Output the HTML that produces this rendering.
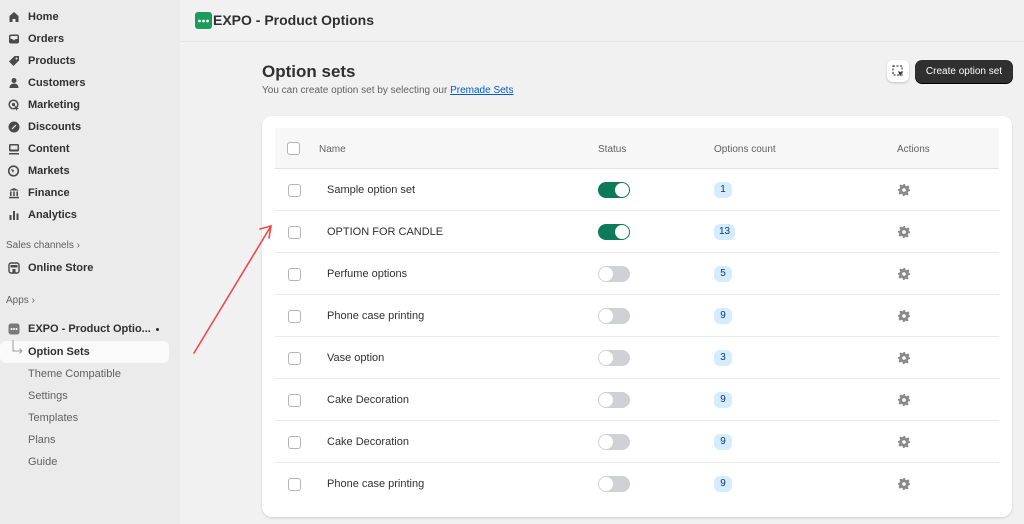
<!DOCTYPE html>
<html><head><meta charset="utf-8"><style>
*{box-sizing:border-box;margin:0;padding:0}
body{width:1024px;height:524px;overflow:hidden;background:#f1f1f1;font-family:"Liberation Sans",sans-serif;color:#303030;position:relative}
.side{position:absolute;left:0;top:0;width:180px;height:524px;background:#ebebeb}
.ni{position:absolute;left:8px;font-size:11px;font-weight:bold;color:#303030;height:20px;line-height:20px;display:flex;align-items:center}
.ni .ic{width:12px;height:12px;margin-right:8px;display:inline-block}
.sub{position:absolute;left:28px;font-size:11px;color:#616161}
.sec{position:absolute;left:6px;font-size:10px;color:#616161}
.abs{position:absolute}
.card{position:absolute;left:262px;top:116px;width:750px;height:401px;background:#fff;border-radius:10px;box-shadow:0 1px 2px rgba(0,0,0,.15)}
.th{position:absolute;left:13px;top:12px;width:724px;height:41px;background:#f7f7f7;border-bottom:1px solid #e3e3e3}
.row{position:absolute;left:13px;width:724px;height:42px;border-bottom:1px solid #ebebeb}
.cb{position:absolute;width:13px;height:13px;border:1px solid #b5b5b5;border-radius:3px;background:#fff}
.tg{position:absolute;left:323px;top:13px;width:32px;height:16px;border-radius:8px}
.tg.on{background:#0d7a5a}
.tg.off{background:#cfd1d4}
.tg i{position:absolute;top:1px;width:14px;height:14px;border-radius:50%;background:#fff}
.bd{position:absolute;left:439px;top:13px;height:16px;min-width:18px;padding:0 5px;border-radius:6px;background:#d5ebff;color:#103a63;font-size:10px;line-height:16px;text-align:center}
.nm{position:absolute;left:52px;top:15px;font-size:11px;color:#303030}
.gear{position:absolute;left:623px;top:15px}
</style></head><body>
<div class="side">
<div class="ni" style="top:7px"><svg class="ic" viewBox="0 0 12 12"><path d="M6 1L1.5 5v6h3V8h3v3h3V5z" fill="#4a4a4a"/></svg>Home</div>
<div class="ni" style="top:29px"><svg class="ic" viewBox="0 0 12 12"><rect x="1" y="1.5" width="10" height="9" rx="2" fill="#4a4a4a"/><path d="M2.5 3h7v3H7.5l-1.5 1.5L4.5 6h-2z" fill="#ebebeb"/></svg>Orders</div>
<div class="ni" style="top:51px"><svg class="ic" viewBox="0 0 12 12"><path d="M6.5 1H11v4.5L5.5 11 1 6.5z" fill="#4a4a4a"/><circle cx="8.5" cy="3.5" r="1" fill="#ebebeb"/></svg>Products</div>
<div class="ni" style="top:73px"><svg class="ic" viewBox="0 0 12 12"><circle cx="6" cy="3.5" r="2.5" fill="#4a4a4a"/><path d="M1.5 11c0-3 2-4.5 4.5-4.5s4.5 1.5 4.5 4.5z" fill="#4a4a4a"/></svg>Customers</div>
<div class="ni" style="top:95px"><svg class="ic" viewBox="0 0 12 12"><circle cx="5.5" cy="5.5" r="4.3" fill="none" stroke="#4a4a4a" stroke-width="1.5"/><circle cx="5.5" cy="5.5" r="1.6" fill="#4a4a4a"/><path d="M6 6l5 4-2 .3-.5 1.7z" fill="#4a4a4a"/></svg>Marketing</div>
<div class="ni" style="top:117px"><svg class="ic" viewBox="0 0 12 12"><circle cx="6" cy="6" r="5.5" fill="#4a4a4a"/><path d="M4 8l4-4" stroke="#ebebeb" stroke-width="1.2"/></svg>Discounts</div>
<div class="ni" style="top:139px"><svg class="ic" viewBox="0 0 12 12"><rect x="1" y="1" width="10" height="7.5" rx="1.5" fill="#4a4a4a"/><rect x="2.5" y="2.5" width="7" height="4" fill="#ebebeb"/><rect x="1" y="10" width="10" height="1.5" fill="#4a4a4a"/></svg>Content</div>
<div class="ni" style="top:161px"><svg class="ic" viewBox="0 0 12 12"><circle cx="5.5" cy="6" r="4.8" fill="none" stroke="#4a4a4a" stroke-width="1.6"/><path d="M3 4l3 1-1 3z" fill="#4a4a4a"/></svg>Markets</div>
<div class="ni" style="top:183px"><svg class="ic" viewBox="0 0 12 12"><path d="M6 1l5 2.5H1z" fill="#4a4a4a"/><rect x="2" y="4.5" width="1.6" height="4.5" fill="#4a4a4a"/><rect x="5.2" y="4.5" width="1.6" height="4.5" fill="#4a4a4a"/><rect x="8.4" y="4.5" width="1.6" height="4.5" fill="#4a4a4a"/><rect x="1" y="9.8" width="10" height="1.5" fill="#4a4a4a"/></svg>Finance</div>
<div class="ni" style="top:205px"><svg class="ic" viewBox="0 0 12 12"><rect x="1.5" y="6" width="2" height="5" fill="#4a4a4a"/><rect x="5" y="2" width="2" height="9" fill="#4a4a4a"/><rect x="8.5" y="4.5" width="2" height="6.5" fill="#4a4a4a"/></svg>Analytics</div>
<div class="sec" style="top:240px">Sales channels ›</div>
<div class="ni" style="top:258px"><svg class="ic" viewBox="0 0 12 12"><rect x="1" y="1" width="10" height="10" rx="2" fill="none" stroke="#4a4a4a" stroke-width="1.4"/><rect x="2.5" y="3" width="7" height="2.5" fill="#4a4a4a"/><rect x="4.5" y="7" width="3" height="4" fill="#4a4a4a"/></svg>Online Store</div>
<div class="sec" style="top:295px">Apps ›</div>
<div class="ni" style="top:319px;font-weight:bold"><svg class="ic" viewBox="0 0 12 12"><rect x="0.5" y="0.5" width="11" height="11" rx="2.5" fill="#7a7a7a"/><circle cx="3.5" cy="6" r="1" fill="#fff"/><circle cx="6" cy="6" r="1" fill="#fff"/><circle cx="8.5" cy="6" r="1" fill="#fff"/></svg>EXPO - Product Optio...</div>
<div class="abs" style="left:156px;top:328px;width:3px;height:3px;border-radius:50%;background:#303030"></div>
<div class="abs" style="left:0;top:341px;width:169px;height:22px;background:#fafafa;border-radius:6px"></div>
<svg class="abs" style="left:11px;top:340px" width="14" height="16"><path d="M2 0v11h9M8.5 8.5L11 11 8.5 13.5" fill="none" stroke="#9a9a9a" stroke-width="1"/></svg>
<div class="sub" style="top:346px;color:#303030;font-weight:bold">Option Sets</div>
<div class="sub" style="top:368px">Theme Compatible</div>
<div class="sub" style="top:390px">Settings</div>
<div class="sub" style="top:412px">Templates</div>
<div class="sub" style="top:434px">Plans</div>
<div class="sub" style="top:456px">Guide</div>
</div>
<div class="abs" style="left:180px;top:41px;width:844px;height:1px;background:#e6e6e6"></div>
<svg class="abs" style="left:195px;top:12px" width="17" height="17"><rect width="17" height="17" rx="3" fill="#1a9c5a"/><circle cx="4.5" cy="9" r="1.4" fill="#fff"/><circle cx="8.5" cy="9" r="1.4" fill="#fff"/><circle cx="12.5" cy="9" r="1.4" fill="#fff"/></svg>
<div class="abs" style="left:213px;top:12px;font-size:14px;font-weight:bold;color:#303030">EXPO - Product Options</div>
<div class="abs" style="left:262px;top:62px;font-size:17px;font-weight:bold;color:#303030">Option sets</div>
<div class="abs" style="left:262px;top:85px;font-size:10px;color:#616161">You can create option set by selecting our <span style="color:#005bd3;text-decoration:underline">Premade Sets</span></div>
<div class="abs" style="left:887px;top:60px;width:22px;height:22px;background:#fff;border-radius:6px;box-shadow:0 1px 2px rgba(0,0,0,.2)"><svg style="position:absolute;left:5px;top:5px" width="12" height="12"><rect x="1" y="1" width="9" height="9" fill="none" stroke="#4a4a4a" stroke-width="1.3" stroke-dasharray="2 1.5"/><path d="M6 6l5 2-2 1-1 2z" fill="#303030"/></svg></div>
<div class="abs" style="left:915px;top:60px;width:98px;height:23px;background:#303030;border-radius:7px;color:#fff;font-size:10px;line-height:23px;text-align:center;box-shadow:0 1px 0 #000">Create option set</div>
<div class="card">
<div class="th"><div class="cb" style="left:12px;top:14px"></div>
<div class="abs" style="left:44px;top:16px;font-size:10px;color:#616161">Name</div>
<div class="abs" style="left:323px;top:16px;font-size:10px;color:#616161">Status</div>
<div class="abs" style="left:439px;top:16px;font-size:10px;color:#616161">Options count</div>
<div class="abs" style="left:622px;top:16px;font-size:10px;color:#616161">Actions</div></div>
<div class="row" style="top:53px"><div class="cb" style="left:13px;top:15px"></div><div class="nm">Sample option set</div><div class="tg on"><i style="right:1px"></i></div><div class="bd">1</div><svg class="gear" width="12" height="12" viewBox="0 0 12 12"><path d="M5 0h2l.3 1.6 1.4.6 1.4-.9 1.4 1.4-.9 1.4.6 1.4L12 5v2l-1.6.3-.6 1.4.9 1.4-1.4 1.4-1.4-.9-1.4.6L7 12H5l-.3-1.6-1.4-.6-1.4.9L.5 9.3l.9-1.4-.6-1.4L0 7V5l1.6-.3.6-1.4-.9-1.4L2.7.5l1.4.9 1.4-.6z" fill="#8a8a8a"/><circle cx="6" cy="6" r="1.8" fill="#fff"/></svg></div>
<div class="row" style="top:95px"><div class="cb" style="left:13px;top:15px"></div><div class="nm">OPTION FOR CANDLE</div><div class="tg on"><i style="right:1px"></i></div><div class="bd">13</div><svg class="gear" width="12" height="12" viewBox="0 0 12 12"><path d="M5 0h2l.3 1.6 1.4.6 1.4-.9 1.4 1.4-.9 1.4.6 1.4L12 5v2l-1.6.3-.6 1.4.9 1.4-1.4 1.4-1.4-.9-1.4.6L7 12H5l-.3-1.6-1.4-.6-1.4.9L.5 9.3l.9-1.4-.6-1.4L0 7V5l1.6-.3.6-1.4-.9-1.4L2.7.5l1.4.9 1.4-.6z" fill="#8a8a8a"/><circle cx="6" cy="6" r="1.8" fill="#fff"/></svg></div>
<div class="row" style="top:137px"><div class="cb" style="left:13px;top:15px"></div><div class="nm">Perfume options</div><div class="tg off"><i style="left:1px"></i></div><div class="bd">5</div><svg class="gear" width="12" height="12" viewBox="0 0 12 12"><path d="M5 0h2l.3 1.6 1.4.6 1.4-.9 1.4 1.4-.9 1.4.6 1.4L12 5v2l-1.6.3-.6 1.4.9 1.4-1.4 1.4-1.4-.9-1.4.6L7 12H5l-.3-1.6-1.4-.6-1.4.9L.5 9.3l.9-1.4-.6-1.4L0 7V5l1.6-.3.6-1.4-.9-1.4L2.7.5l1.4.9 1.4-.6z" fill="#8a8a8a"/><circle cx="6" cy="6" r="1.8" fill="#fff"/></svg></div>
<div class="row" style="top:179px"><div class="cb" style="left:13px;top:15px"></div><div class="nm">Phone case printing</div><div class="tg off"><i style="left:1px"></i></div><div class="bd">9</div><svg class="gear" width="12" height="12" viewBox="0 0 12 12"><path d="M5 0h2l.3 1.6 1.4.6 1.4-.9 1.4 1.4-.9 1.4.6 1.4L12 5v2l-1.6.3-.6 1.4.9 1.4-1.4 1.4-1.4-.9-1.4.6L7 12H5l-.3-1.6-1.4-.6-1.4.9L.5 9.3l.9-1.4-.6-1.4L0 7V5l1.6-.3.6-1.4-.9-1.4L2.7.5l1.4.9 1.4-.6z" fill="#8a8a8a"/><circle cx="6" cy="6" r="1.8" fill="#fff"/></svg></div>
<div class="row" style="top:221px"><div class="cb" style="left:13px;top:15px"></div><div class="nm">Vase option</div><div class="tg off"><i style="left:1px"></i></div><div class="bd">3</div><svg class="gear" width="12" height="12" viewBox="0 0 12 12"><path d="M5 0h2l.3 1.6 1.4.6 1.4-.9 1.4 1.4-.9 1.4.6 1.4L12 5v2l-1.6.3-.6 1.4.9 1.4-1.4 1.4-1.4-.9-1.4.6L7 12H5l-.3-1.6-1.4-.6-1.4.9L.5 9.3l.9-1.4-.6-1.4L0 7V5l1.6-.3.6-1.4-.9-1.4L2.7.5l1.4.9 1.4-.6z" fill="#8a8a8a"/><circle cx="6" cy="6" r="1.8" fill="#fff"/></svg></div>
<div class="row" style="top:263px"><div class="cb" style="left:13px;top:15px"></div><div class="nm">Cake Decoration</div><div class="tg off"><i style="left:1px"></i></div><div class="bd">9</div><svg class="gear" width="12" height="12" viewBox="0 0 12 12"><path d="M5 0h2l.3 1.6 1.4.6 1.4-.9 1.4 1.4-.9 1.4.6 1.4L12 5v2l-1.6.3-.6 1.4.9 1.4-1.4 1.4-1.4-.9-1.4.6L7 12H5l-.3-1.6-1.4-.6-1.4.9L.5 9.3l.9-1.4-.6-1.4L0 7V5l1.6-.3.6-1.4-.9-1.4L2.7.5l1.4.9 1.4-.6z" fill="#8a8a8a"/><circle cx="6" cy="6" r="1.8" fill="#fff"/></svg></div>
<div class="row" style="top:305px"><div class="cb" style="left:13px;top:15px"></div><div class="nm">Cake Decoration</div><div class="tg off"><i style="left:1px"></i></div><div class="bd">9</div><svg class="gear" width="12" height="12" viewBox="0 0 12 12"><path d="M5 0h2l.3 1.6 1.4.6 1.4-.9 1.4 1.4-.9 1.4.6 1.4L12 5v2l-1.6.3-.6 1.4.9 1.4-1.4 1.4-1.4-.9-1.4.6L7 12H5l-.3-1.6-1.4-.6-1.4.9L.5 9.3l.9-1.4-.6-1.4L0 7V5l1.6-.3.6-1.4-.9-1.4L2.7.5l1.4.9 1.4-.6z" fill="#8a8a8a"/><circle cx="6" cy="6" r="1.8" fill="#fff"/></svg></div>
<div class="row" style="top:347px;border-bottom:none"><div class="cb" style="left:13px;top:15px"></div><div class="nm">Phone case printing</div><div class="tg off"><i style="left:1px"></i></div><div class="bd">9</div><svg class="gear" width="12" height="12" viewBox="0 0 12 12"><path d="M5 0h2l.3 1.6 1.4.6 1.4-.9 1.4 1.4-.9 1.4.6 1.4L12 5v2l-1.6.3-.6 1.4.9 1.4-1.4 1.4-1.4-.9-1.4.6L7 12H5l-.3-1.6-1.4-.6-1.4.9L.5 9.3l.9-1.4-.6-1.4L0 7V5l1.6-.3.6-1.4-.9-1.4L2.7.5l1.4.9 1.4-.6z" fill="#8a8a8a"/><circle cx="6" cy="6" r="1.8" fill="#fff"/></svg></div>
</div>
<svg class="abs" style="left:0;top:0" width="1024" height="524"><path d="M194 353L271 226M260 229L271 226 269 238" fill="none" stroke="#f04848" stroke-width="1.6" stroke-linecap="round"/></svg>
</body></html>
